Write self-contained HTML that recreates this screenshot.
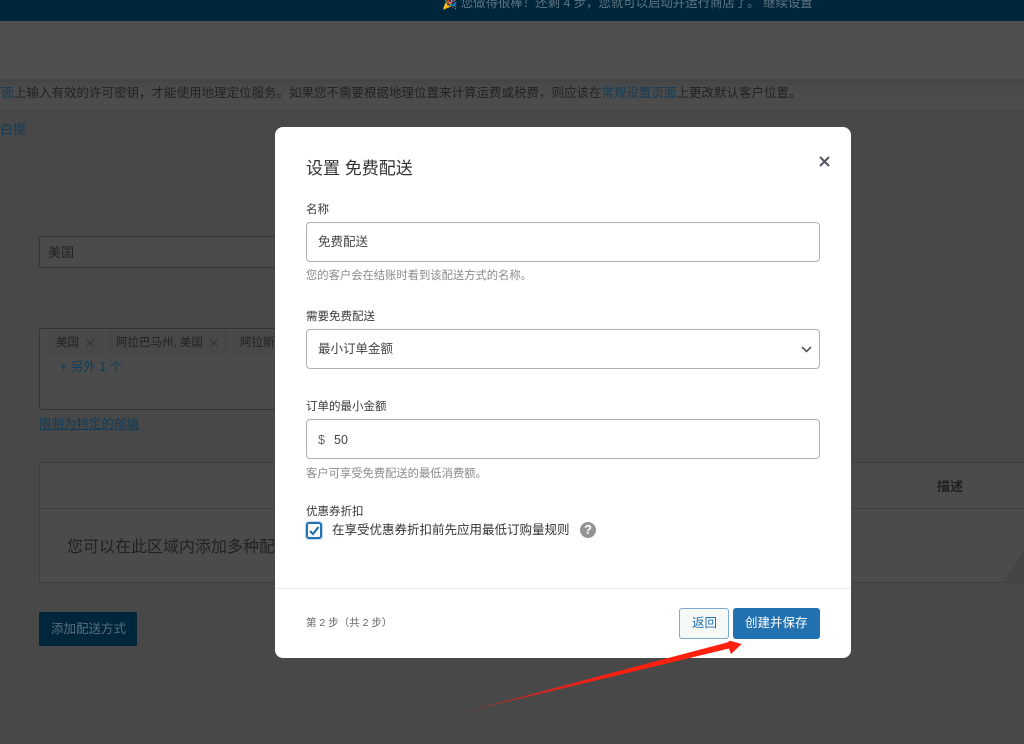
<!DOCTYPE html>
<html lang="zh">
<head>
<meta charset="utf-8">
<title>设置 免费配送</title>
<style>
html,body{margin:0;padding:0}
body{width:1024px;height:744px;overflow:hidden;position:relative;background:#484848;font-family:"Liberation Sans","Noto Sans CJK SC",sans-serif;color:#1f1f1f}
.a{position:absolute;white-space:nowrap}
.box{position:absolute;box-sizing:border-box}
.t12{font-size:12.5px;line-height:16px}
.t13{font-size:13px;line-height:18px}
.field{position:absolute;box-sizing:border-box;left:306px;width:514px;height:40px;background:#fff;border:1px solid #b0b0b4;border-radius:4px}
.label{color:#3a3a3a;font-size:11.5px;line-height:16px}
.help{color:#8a8a8a;font-size:11.3px;line-height:16px}
.val{color:#444;font-size:12.5px;line-height:18px}
</style>
</head>
<body>
<div class="box" style="left:0;top:0;width:1024px;height:21px;background:#00263b"></div>
<div class="a" style="left:442px;top:-5px;font-size:12.4px;line-height:16px;color:#5f7584">🎉 您做得很棒！还剩 4 步，您就可以启动并运行商店了。 继续设置</div>
<div class="box" style="left:0;top:21px;width:1024px;height:58px;background:#4e4e4e"></div>
<div class="box" style="left:0;top:79px;width:1024px;height:32px;background:linear-gradient(#444 0,#4b4b4b 8px,#4c4c4c);border-bottom:1px solid #424242"></div>
<div class="a" style="left:-11px;top:84px;font-size:12.5px;line-height:18px;color:#222"><span style="color:#143c57">页面</span>上输入有效的许可密钥，才能使用地理定位服务。如果您不需要根据地理位置来计算运费或税费，则应该在<span style="color:#143c57">常规设置页面</span>上更改默认客户位置。</div>
<div class="a" style="left:0;top:122px;font-size:13px;line-height:16px;color:#143c57">白提</div>

<div class="box" style="left:39px;top:236px;width:300px;height:32px;border:1px solid #333;border-radius:3px;background:#4b4b4b"></div>
<div class="a t13" style="left:48px;top:244px;color:#222">美国</div>

<div class="box" style="left:39px;top:328px;width:300px;height:82px;border:1px solid #333;border-radius:3px;background:#4b4b4b"></div>
<div class="box" style="left:48px;top:331px;width:56px;height:24px;background:#484848"></div>
<div class="a" style="left:56px;top:336px;font-size:11.5px;line-height:14px;color:#222">美国</div>
<svg class="a" style="left:85px;top:338px" width="10" height="10" viewBox="0 0 10 10"><path d="M1.5 1.5 L8.5 8.5 M8.5 1.5 L1.5 8.5" stroke="#333" stroke-width="1" fill="none"/></svg>
<div class="box" style="left:108px;top:331px;width:120px;height:24px;background:#484848"></div>
<div class="a" style="left:116px;top:336px;font-size:11.5px;line-height:14px;color:#222">阿拉巴马州, 美国</div>
<svg class="a" style="left:209px;top:338px" width="10" height="10" viewBox="0 0 10 10"><path d="M1.5 1.5 L8.5 8.5 M8.5 1.5 L1.5 8.5" stroke="#333" stroke-width="1" fill="none"/></svg>
<div class="box" style="left:232px;top:331px;width:43px;height:24px;background:#484848"></div>
<div class="a" style="left:240px;top:336px;width:35px;overflow:hidden;font-size:11.5px;line-height:14px;color:#222">阿拉斯加</div>
<div class="a t12" style="left:60px;top:359px;color:#0c3f5c">+ 另外 1 个</div>
<div class="a t12" style="left:39px;top:416px;color:#143c57;text-decoration:underline">限制为特定的邮编</div>

<div class="box" style="left:39px;top:462px;width:985px;height:121px;border:1px solid #3e3e3e;border-right:0;background:#4b4b4b"></div>
<div class="box" style="left:39px;top:508px;width:985px;height:1px;background:#3e3e3e"></div>
<svg class="a" style="left:1000px;top:550px" width="24" height="32" viewBox="0 0 24 32"><path d="M3 32 L24 0 V32 Z" fill="#454545"/></svg>
<div class="a" style="left:67px;top:538px;font-size:16px;line-height:20px;color:#222">您可以在此区域内添加多种配送方式</div>
<div class="a t13" style="left:937px;top:478px;color:#1f1f1f;font-weight:bold">描述</div>

<div class="box" style="left:39px;top:612px;width:98px;height:34px;background:#00263b;border-radius:2px"></div>
<div class="a" style="left:51px;top:621px;font-size:12.5px;line-height:16px;color:#5d6f7b">添加配送方式</div>

<div class="box" style="left:275px;top:127px;width:576px;height:531px;background:#fff;border-radius:8px"></div>
<div class="a" style="left:306px;top:157px;font-size:17px;line-height:24px;color:#333">设置 免费配送</div>
<svg class="a" style="left:818px;top:155px" width="13" height="13" viewBox="0 0 13 13"><path d="M2 2 L11 11 M11 2 L2 11" stroke="#50575e" stroke-width="2" fill="none"/></svg>

<div class="a label" style="left:306px;top:202px">名称</div>
<div class="field" style="top:222px"></div>
<div class="a val" style="left:318px;top:233px">免费配送</div>
<div class="a help" style="left:306px;top:268px">您的客户会在结账时看到该配送方式的名称。</div>

<div class="a label" style="left:306px;top:309px">需要免费配送</div>
<div class="field" style="top:329px"></div>
<div class="a val" style="left:318px;top:340px">最小订单金额</div>
<svg class="a" style="left:800px;top:345px" width="13" height="9" viewBox="0 0 13 9"><path d="M2 2 L6.5 6.5 L11 2" stroke="#50575e" stroke-width="1.6" fill="none"/></svg>

<div class="a label" style="left:306px;top:399px">订单的最小金额</div>
<div class="field" style="top:419px"></div>
<div class="a val" style="left:318px;top:431px;color:#666">$</div>
<div class="a val" style="left:334px;top:431px">50</div>
<div class="a help" style="left:306px;top:466px">客户可享受免费配送的最低消费额。</div>

<div class="a label" style="left:306px;top:504px">优惠券折扣</div>
<div class="box" style="left:306px;top:522px;width:16px;height:17px;border:2px solid #2271b1;border-radius:3px;box-shadow:0 0 0 1px #c3d9ea;background:#fff"></div>
<svg class="a" style="left:307px;top:523px" width="14" height="15" viewBox="0 0 14 15"><path d="M3 8 L6 11 L11.5 4" stroke="#2271b1" stroke-width="2.2" fill="none"/></svg>
<div class="a" style="left:332px;top:521px;font-size:12.5px;line-height:18px;color:#333">在享受优惠券折扣前先应用最低订购量规则</div>
<div class="a" style="left:580px;top:522px;width:16px;height:16px;border-radius:50%;background:#949494;color:#fff;font-size:13px;line-height:16px;font-weight:bold;text-align:center">?</div>

<div class="box" style="left:275px;top:588px;width:576px;height:1px;background:#eeeeee"></div>
<div class="a" style="left:306px;top:615px;font-size:10.5px;line-height:16px;color:#666">第 2 步（共 2 步）</div>
<div class="box" style="left:679px;top:608px;width:50px;height:31px;background:#f6f7f7;border:1px solid #7fa9cd;border-radius:3px"></div>
<div class="a" style="left:692px;top:615px;font-size:12.5px;line-height:17px;color:#2271b1">返回</div>
<div class="box" style="left:733px;top:608px;width:87px;height:31px;background:#2271b1;border-radius:3px"></div>
<div class="a" style="left:745px;top:615px;font-size:12.5px;line-height:17px;color:#fff">创建并保存</div>

<svg class="a" style="left:440px;top:635px" width="310" height="85" viewBox="0 0 310 85">
<defs><linearGradient id="g" gradientUnits="userSpaceOnUse" x1="8" y1="81" x2="170" y2="45"><stop offset="0" stop-color="#ff2010" stop-opacity="0"/><stop offset=".6" stop-color="#e8201a" stop-opacity=".85"/><stop offset="1" stop-color="#ff2010"/></linearGradient></defs>
<path d="M8 81 L287 7.5 L290 5.7 L301.7 9 L291 19 L289 13.5 Z" fill="url(#g)"/>
</svg>
</body>
</html>
